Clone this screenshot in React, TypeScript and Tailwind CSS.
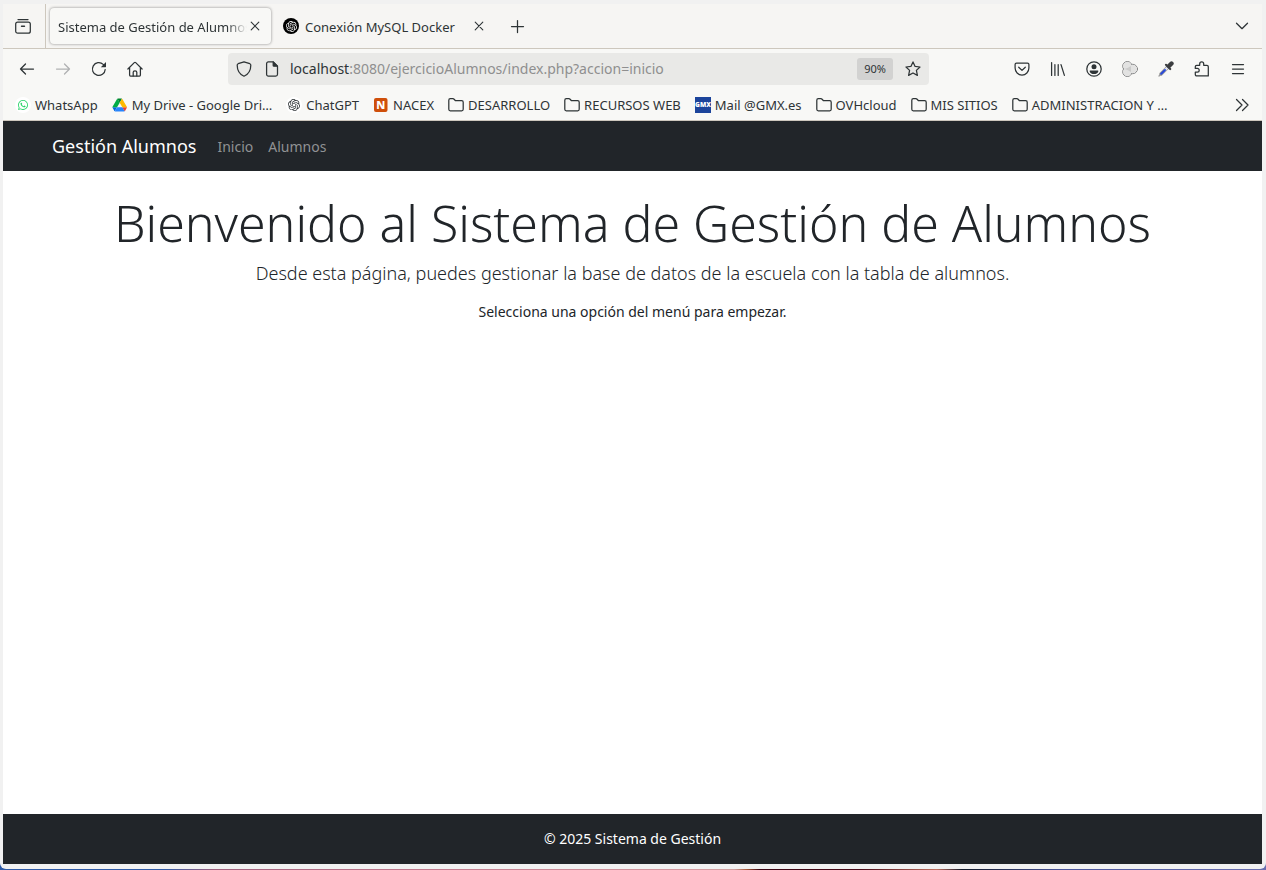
import { type ReactNode } from "react";
import { SiOpenai, SiWhatsapp } from "react-icons/si";

function Icon({ children, className = "" }: { children: ReactNode; className?: string }) {
  return (
    <svg
      viewBox="0 0 16 16"
      className={`size-4 shrink-0 ${className}`}
      fill="none"
      stroke="currentColor"
      strokeWidth="1.25"
      strokeLinecap="round"
      strokeLinejoin="round"
      aria-hidden="true"
    >
      {children}
    </svg>
  );
}

const Folder = () => (
  <Icon>
    <path d="M.8 12.3V3.2c0-.9.6-1.5 1.5-1.5h2.6c.5 0 .9.2 1.2.5l1.4 1.500h6.200c.9 0 1.500.6 1.500 1.500v7.100c0 .9-.6 1.500-1.500 1.500H2.300c-.9 0-1.500-.6-1.500-1.500z" />
  </Icon>
);

const Drive = () => (
  <svg viewBox="-3 -5 97 88" className="size-4 shrink-0" aria-hidden="true">
    <path fill="#0066da" d="M6.600 66.850l3.850 6.650c.8 1.400 1.950 2.500 3.300 3.300l13.750-23.800H0c0 1.550.4 3.100 1.200 4.500z" />
    <path fill="#00ac47" d="M43.650 25L29.900 1.200c-1.350.8-2.500 1.900-3.300 3.300L1.200 48.500A9.060 9.060 0 000 53h27.500z" />
    <path fill="#ea4335" d="M73.550 76.800c1.350-.8 2.500-1.900 3.300-3.300l1.600-2.750 7.650-13.250c.8-1.400 1.200-2.950 1.200-4.500H59.800l5.850 11.500z" />
    <path fill="#00832d" d="M43.650 25L57.400 1.200C56.050.4 54.500 0 52.900 0H34.400c-1.600 0-3.150.45-4.500 1.200z" />
    <path fill="#2684fc" d="M59.800 53H27.500L13.750 76.800c1.350.8 2.900 1.200 4.500 1.200h50.800c1.600 0 3.150-.45 4.500-1.200z" />
    <path fill="#ffba00" d="M73.400 26.500L60.700 4.500c-.8-1.400-1.950-2.500-3.300-3.300L43.650 25 59.800 53h27.450c0-1.550-.4-3.100-1.200-4.500z" />
  </svg>
);

const WhiteBadge = ({ children }: { children: ReactNode }) => (
  <span className="flex size-4 shrink-0 items-center justify-center rounded-full bg-white">{children}</span>
);

const Nacex = () => (
  <svg viewBox="0 0 16 16" className="size-4 shrink-0" aria-hidden="true">
    <rect x="1" y="1" width="13.500" height="14" rx="2" fill="#cf4f0a" />
    <text x="7.800" y="12" textAnchor="middle" fontSize="11" fontWeight="800" fill="#fff">
      N
    </text>
  </svg>
);

const Gmx = () => (
  <svg viewBox="0 0 16 16" className="size-4 shrink-0" aria-hidden="true">
    <rect width="16" height="16" fill="#1c449b" />
    <text x="8" y="10.400" textAnchor="middle" fontSize="6.500" fontWeight="900" fill="#fff">
      GMX
    </text>
  </svg>
);

const bookmarks: { label: string; icon: ReactNode }[] = [
  { label: "WhatsApp", icon: <WhiteBadge><SiWhatsapp className="size-[10px] text-[#25d366]" /></WhiteBadge> },
  { label: "My Drive - Google Dri…", icon: <Drive /> },
  { label: "ChatGPT", icon: <WhiteBadge><SiOpenai className="size-3" /></WhiteBadge> },
  { label: "NACEX", icon: <Nacex /> },
  { label: "DESARROLLO", icon: <Folder /> },
  { label: "RECURSOS WEB", icon: <Folder /> },
  { label: "Mail @GMX.es", icon: <Gmx /> },
  { label: "OVHcloud", icon: <Folder /> },
  { label: "MIS SITIOS", icon: <Folder /> },
  { label: "ADMINISTRACION Y …", icon: <Folder /> },
];

function ToolButton({ label, children, className = "" }: { label: string; children: ReactNode; className?: string }) {
  return (
    <button type="button" aria-label={label} className={`flex h-8 w-9 shrink-0 items-center justify-center ${className}`}>
      {children}
    </button>
  );
}

const Cross = () => (
  <Icon>
    <path strokeWidth="1.100" d="M4.200 4.200l7.600 7.600M11.800 4.200l-7.600 7.600" />
  </Icon>
);

function TabStrip() {
  return (
    <div className="flex h-[45px] items-center border-b border-[#cdc7bd] bg-[#f6f5f3]">
      <div className="flex h-full w-[43px] shrink-0 items-center border-r border-[#cdc7bd] pl-[2px]">
        <ToolButton label="Vista de Firefox">
          <Icon>
            <path d="M3 1.600h10" />
            <rect x=".7" y="4.100" width="14.600" height="11.100" rx="2" />
            <path strokeWidth="1.400" d="M6.500 8.300h3" />
          </Icon>
        </ToolButton>
      </div>
      <div className="ml-1 flex h-9 w-[221px] items-center rounded bg-[#f8f8f6] px-2 shadow-[0_0_3px_rgba(0,0,0,0.45)]">
        <span className="min-w-0 flex-1 overflow-hidden pt-[3px] whitespace-nowrap [mask-image:linear-gradient(to_left,transparent,black_20px)]">
          Sistema de Gestión de Alumnos
        </span>
        <button type="button" aria-label="Cerrar pestaña">
          <Cross />
        </button>
      </div>
      <div className="flex h-9 w-[228px] items-center gap-[6px] px-3">
        <span className="flex size-4 shrink-0 items-center justify-center rounded-full bg-black text-white">
          <SiOpenai className="size-[11px]" />
        </span>
        <span className="min-w-0 flex-1 pt-[3px] whitespace-nowrap">Conexión MySQL Docker</span>
        <button type="button" aria-label="Cerrar pestaña">
          <Cross />
        </button>
      </div>
      <ToolButton label="Nueva pestaña">
        <Icon>
          <path d="M8.500 2.500v12M2.500 8.500h12" />
        </Icon>
      </ToolButton>
      <ToolButton label="Listar pestañas" className="mr-[2px] ml-auto">
        <Icon>
          <path d="M2.500 5.200L8 10.700l5.500-5.500" />
        </Icon>
      </ToolButton>
    </div>
  );
}

function Toolbar() {
  return (
    <div className="flex h-10 items-center px-[6px]">
      <ToolButton label="Atrás">
        <Icon>
          <path d="M14.500 8h-13M6.500 3l-5 5 5 5" />
        </Icon>
      </ToolButton>
      <ToolButton label="Adelante" className="text-[#b0b1b2]">
        <Icon>
          <path d="M1.500 8h13M9.500 3l5 5-5 5" />
        </Icon>
      </ToolButton>
      <ToolButton label="Recargar">
        <Icon>
          <path d="M14.200 8.500a6.400 6.400 0 11-2-5.100L14 5.200" />
          <path fill="currentColor" stroke="none" d="M15 1v4.700c0 .3-.2.500-.5.500H9.800z" />
        </Icon>
      </ToolButton>
      <ToolButton label="Inicio">
        <Icon>
          <path d="M.9 8L7.300 1.600c.4-.4 1-.4 1.400 0L15.100 8M2.600 6.800v7.300c0 .5.400.9.900.9h9c.5 0 .9-.4.900-.9V6.800" />
          <path d="M6.200 14.900v-3.600c0-.9.700-1.500 1.800-1.500s1.800.6 1.800 1.500v3.600" />
        </Icon>
      </ToolButton>
      <div className="mx-[75px] flex h-8 min-w-0 flex-1 items-center rounded bg-[#e9e9e7] px-2">
        <Icon>
          <path d="M8 .8l5.800 1.900c.7.300 1 .8 1 1.500 0 5-1.900 8.800-6.800 11-4.900-2.200-6.800-6-6.800-11 0-.7.300-1.200 1-1.500z" />
        </Icon>
        <Icon className="ml-3">
          <path d="M2.600 13.300V2.700c0-1 .8-1.800 1.800-1.800h4.800l4.300 4.300v8.100c0 1-.8 1.800-1.800 1.800H4.400c-1 0-1.800-.8-1.800-1.800z" />
          <path fill="currentColor" d="M9.200 1v3.400c0 .5.300.8.800.8h3.400z" />
        </Icon>
        <a href="#inicio" className="ml-[10px] min-w-0 flex-1 truncate pb-[2px] text-[14px] text-[#8f8f8f]">
          <span className="text-[#2e3436]">localhost</span>:8080/ejercicioAlumnos/index.php?accion=inicio
        </a>
        <button type="button" className="h-[22px] w-9 rounded-[3px] bg-[#d2d2d1] text-[11px]">
          90%
        </button>
        <button type="button" aria-label="Añadir a marcadores" className="ml-3">
          <Icon>
            <path d="M8 .9l2.100 4.500 4.900.6-3.600 3.400 1 5L8 12l-4.400 2.400 1-5L1 6l4.900-.6z" />
          </Icon>
        </button>
      </div>
      <ToolButton label="Pocket">
        <Icon>
          <path d="M2.500 2h11c.8 0 1.400.6 1.400 1.400v3.700a6.900 6.900 0 01-13.800 0V3.400C1.100 2.600 1.700 2 2.500 2z" />
          <path d="M4.700 6.200L8 9.400l3.300-3.200" />
        </Icon>
      </ToolButton>
      <ToolButton label="Biblioteca">
        <Icon>
          <path d="M1.600 1.600v12.800M4.900 3.600v10.800M8.200 3.600v10.800M11 3.600l3.400 10.800" />
        </Icon>
      </ToolButton>
      <ToolButton label="Cuenta">
        <Icon>
          <circle cx="8" cy="8" r="7.200" />
          <circle cx="8" cy="5.800" r="2.500" fill="currentColor" stroke="none" />
          <path fill="currentColor" stroke="none" d="M4.300 9.500h7.400c.5 0 .8.400.6.900-.7 1.700-2.300 2.700-4.300 2.700s-3.600-1-4.300-2.700c-.2-.5.100-.9.600-.9z" />
        </Icon>
      </ToolButton>
      <ToolButton label="Contenedores">
        <Icon>
          <g stroke="#808182" strokeWidth="1">
            <circle cx="5.400" cy="5.200" r="4.700" />
            <circle cx="5.400" cy="10.800" r="4.700" />
            <circle cx="10.800" cy="8" r="4.700" />
          </g>
          <g fill="#e2e2e1" stroke="none">
            <circle cx="5.400" cy="5.200" r="4.200" />
            <circle cx="5.400" cy="10.800" r="4.200" />
            <circle cx="10.800" cy="8" r="4.200" />
          </g>
          <path fill="#cbcbca" stroke="none" d="M2.500 8l3.500-1.300L9 5v6l-3-1.700z" />
        </Icon>
      </ToolButton>
      <ToolButton label="Selector de color">
        <Icon>
          <path stroke="#9a9a9a" strokeWidth="3.600" d="M9.500 6.500l-6.500 6.500" />
          <path stroke="#9a9a9a" d="M2.500 13.500L1 15" />
          <path stroke="#e3e7f8" strokeWidth="2" d="M9.300 6.700l-2.500 2.500" />
          <path stroke="#2849d8" strokeWidth="2" d="M7 9l-3.800 3.800" />
          <path stroke="#3c3e40" strokeWidth="2.200" d="M8 3.800l4.200 4.200" />
          <path stroke="#3c3e40" strokeWidth="4.400" d="M11 5L13.500 2.500" />
        </Icon>
      </ToolButton>
      <ToolButton label="Extensiones">
        <Icon>
          <path d="M5.700 4.300V2.900a2 2 0 014 0v1.400h3.200c.8 0 1.400.6 1.400 1.400v9.200H2.700c-.8 0-1.400-.6-1.400-1.400v-2.300h2a1.900 1.900 0 000-3.800h-2V5.700c0-.8.600-1.400 1.400-1.400z" />
        </Icon>
      </ToolButton>
      <ToolButton label="Menú">
        <Icon>
          <path d="M2.500 3.500h11M2.500 8h11M2.500 12.500h11" />
        </Icon>
      </ToolButton>
    </div>
  );
}

function Bookmarks() {
  return (
    <div className="flex h-8 items-center border-b border-[#cdc7bd] pl-3">
      <nav aria-label="Marcadores" className="flex min-w-0 flex-1 gap-[14px] overflow-hidden">
        {bookmarks.map((b) => (
          <a key={b.label} href="#marcador" className="flex shrink-0 items-center gap-1 whitespace-nowrap">
            {b.icon}
            <span className="pt-[2px]">{b.label}</span>
          </a>
        ))}
      </nav>
      <ToolButton label="Más marcadores" className="mr-[2px]">
        <Icon>
          <path d="M2.500 2.500L8 8l-5.500 5.500M8.500 2.500L14 8l-5.500 5.500" />
        </Icon>
      </ToolButton>
    </div>
  );
}

export default function App() {
  return (
    <div className="flex min-h-screen flex-col bg-[linear-gradient(to_right,#2f5aa5_0%,#2f5aa5_13%,#a0607c_17%,#c0788c_33%,#d49aa0_55%,#d0a0a0_58%,#a85838_59%,#3a0412_60%,#4a0a18_68%,#c07060_74%,#101828_76%,#4a559c_84%,#6a6fb0_100%)] pb-px font-['Noto_Sans',sans-serif]">
      <div className="flex flex-1 flex-col rounded-b-md bg-[#f1f1f1] pt-1 pr-1 pb-[5px] pl-[3px]">
        <header className="bg-[#f8f8f6] text-[13px] text-[#2e3436]">
          <TabStrip />
          <Toolbar />
          <Bookmarks />
        </header>
        <div className="flex flex-1 flex-col bg-white text-[14px] text-[#212529]">
          <nav aria-label="Principal" className="flex h-[50px] items-center bg-[#212529] px-[49px]">
            <a href="#inicio" className="mr-[21px] text-[18px] text-white">
              Gestión Alumnos
            </a>
            <div className="flex gap-[15px] text-[#909294]">
              <a href="#inicio">Inicio</a>
              <a href="#alumnos">Alumnos</a>
            </div>
          </nav>
          <main className="flex-1 px-4 pt-[22px] text-center">
            <h1 className="text-[50px] leading-[60px] font-light">Bienvenido al Sistema de Gestión de Alumnos</h1>
            <p className="mt-[7px] text-[18px] leading-[27px] font-light">
              Desde esta página, puedes gestionar la base de datos de la escuela con la tabla de alumnos.
            </p>
            <p className="mt-[14px] leading-[22px]">Selecciona una opción del menú para empezar.</p>
          </main>
          <footer className="bg-[#212529] py-[14px] text-center leading-[22px] text-white">
            <p>© 2025 Sistema de Gestión</p>
          </footer>
        </div>
      </div>
    </div>
  );
}
